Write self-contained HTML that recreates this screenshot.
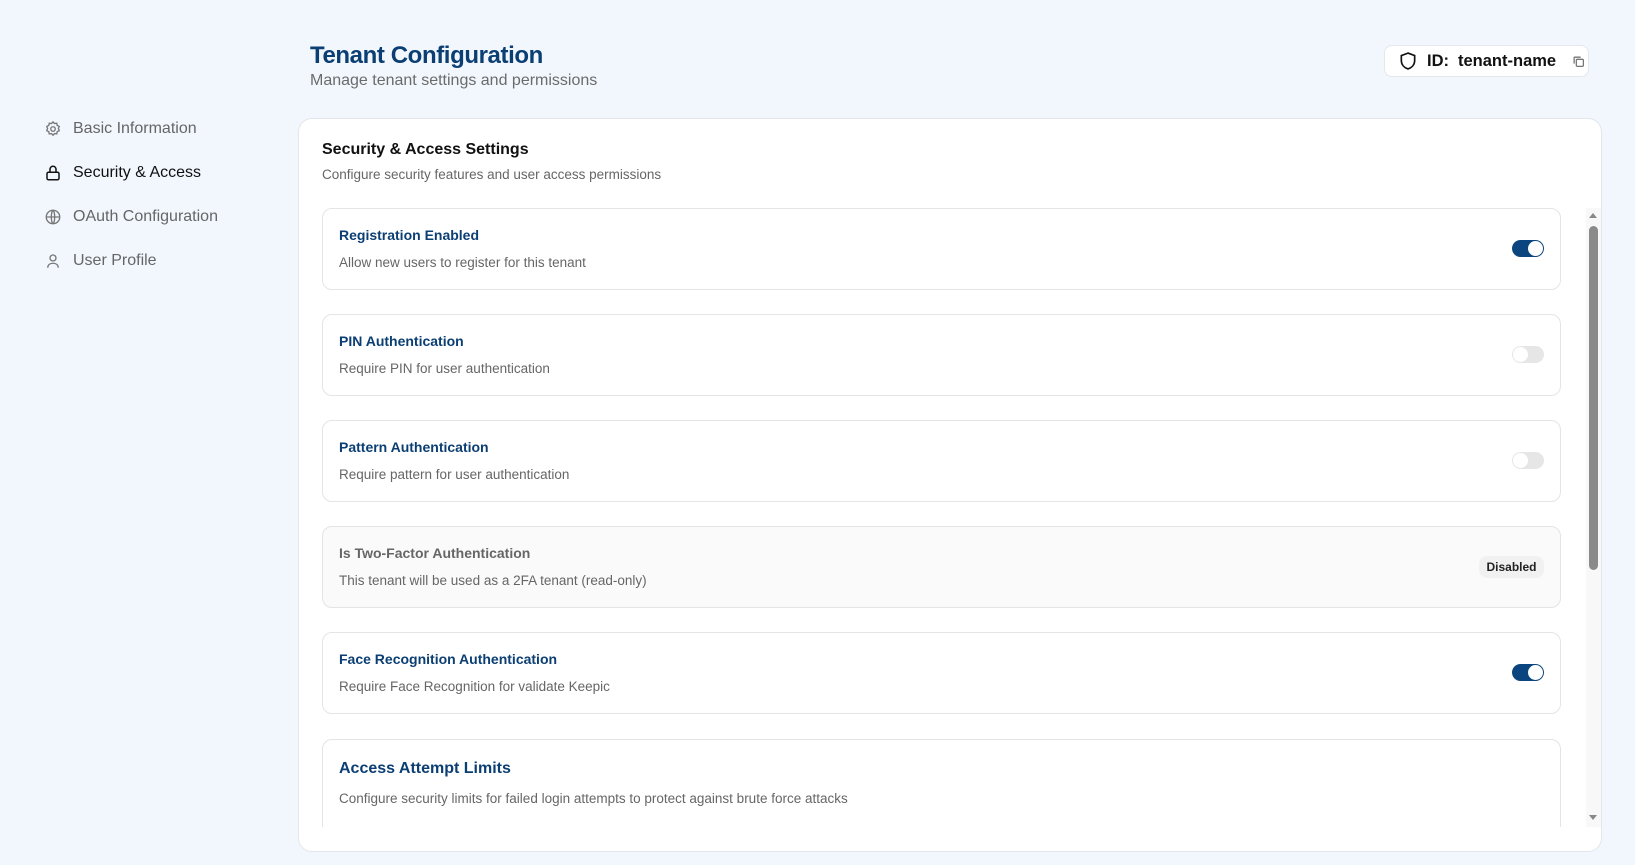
<!DOCTYPE html>
<html><head><meta charset="utf-8"><style>
*{box-sizing:border-box;margin:0;padding:0}
body{width:1635px;height:865px;background:#f2f7fe;font-family:"Liberation Sans",sans-serif;position:relative;overflow:hidden;color:#222}
.abs{position:absolute}
h1{position:absolute;left:310px;top:42px;font-size:24px;font-weight:700;color:#0b3e73;letter-spacing:-0.4px}
.sub{left:310px;top:72px;font-size:16px;color:#6b6b6b}
.nav{left:44px;font-size:16px;color:#666;display:flex;align-items:center;gap:11px}
.nav svg{width:18px;height:18px}
.badge{left:1384px;top:45px;width:205px;height:32px;background:#fff;border:1px solid #e4e7ec;border-radius:8px;display:flex;align-items:center;padding-left:13px;font-size:16.5px;font-weight:700;color:#111}
.card{left:298px;top:118px;width:1304px;height:734px;background:#fff;border:1px solid #e3e6ea;border-radius:14px}
.row{position:absolute;left:322px;width:1239px;height:82px;border:1px solid #e4e4e4;border-radius:10px;background:#fff}
.row .t{position:absolute;left:16px;top:18px;font-size:14px;font-weight:700;color:#0b3e73}
.row .d{position:absolute;left:16px;top:46px;font-size:13.5px;color:#666}
.tg{position:absolute;right:16px;top:31px;width:32px;height:17px;border-radius:9px;background:#0b4580}
.tg::after{content:"";position:absolute;right:1px;top:1px;width:15px;height:15px;border-radius:50%;background:#fff}
.tg.off{background:#e6e6e6}
.tg.off::after{left:1px;right:auto}
</style></head><body>
<h1>Tenant Configuration</h1>
<div class="abs sub">Manage tenant settings and permissions</div>

<div class="abs nav" style="top:120px"><svg viewBox="0 0 24 24" fill="none" stroke="#777" stroke-width="1.8"><circle cx="12" cy="12" r="3"/><path d="M12 2.5l2 2.2 3-.4.6 2.9 2.7 1.4-1.1 2.8 1.1 2.8-2.7 1.4-.6 2.9-3-.4-2 2.2-2-2.2-3 .4-.6-2.9-2.7-1.4 1.1-2.8-1.1-2.8 2.7-1.4.6-2.9 3 .4z"/></svg><span>Basic Information</span></div>
<div class="abs nav" style="top:164px;color:#111"><svg viewBox="0 0 24 24" fill="none" stroke="#111" stroke-width="2"><rect x="4" y="11" width="16" height="10" rx="2"/><path d="M8 11V7a4 4 0 0 1 8 0v4"/></svg><span>Security &amp; Access</span></div>
<div class="abs nav" style="top:208px"><svg viewBox="0 0 24 24" fill="none" stroke="#777" stroke-width="1.8"><circle cx="12" cy="12" r="9"/><path d="M3 12h18M12 3c3 3 3 15 0 18M12 3c-3 3-3 15 0 18"/></svg><span>OAuth Configuration</span></div>
<div class="abs nav" style="top:252px"><svg viewBox="0 0 24 24" fill="none" stroke="#777" stroke-width="1.8"><circle cx="12" cy="8" r="4"/><path d="M5 21c0-4 3-6 7-6s7 2 7 6"/></svg><span>User Profile</span></div>

<div class="abs badge"><svg width="20" height="20" viewBox="0 0 24 24" fill="none" stroke="#111" stroke-width="2"><path d="M12 2.5l8 3v6c0 5-3.5 8.5-8 10-4.5-1.5-8-5-8-10v-6z"/></svg><span style="margin-left:9px">ID:</span><span style="margin-left:9px">tenant-name</span><svg style="margin-left:16px" width="13" height="13" viewBox="0 0 24 24" fill="none" stroke="#777" stroke-width="2.4"><rect x="8" y="8" width="13" height="13" rx="2"/><path d="M4 16V5a1 1 0 0 1 1-1h11"/></svg></div>

<div class="abs card"></div>
<div class="abs" style="left:322px;top:141px;font-size:16px;font-weight:700;color:#111">Security &amp; Access Settings</div>
<div class="abs" style="left:322px;top:167px;font-size:13.5px;color:#666">Configure security features and user access permissions</div>

<div class="abs" style="left:300px;top:200px;width:1286px;height:627px;overflow:hidden">
<div class="row" style="left:22px;top:8px"><div class="t">Registration Enabled</div><div class="d">Allow new users to register for this tenant</div><div class="tg"></div></div>
<div class="row" style="left:22px;top:114px"><div class="t">PIN Authentication</div><div class="d">Require PIN for user authentication</div><div class="tg off"></div></div>
<div class="row" style="left:22px;top:220px"><div class="t">Pattern Authentication</div><div class="d">Require pattern for user authentication</div><div class="tg off"></div></div>
<div class="row" style="left:22px;top:326px;background:#fafafa"><div class="t" style="color:#666">Is Two-Factor Authentication</div><div class="d">This tenant will be used as a 2FA tenant (read-only)</div><div style="position:absolute;right:16px;top:29px;width:65px;height:22px;border-radius:8px;background:#f1f1f1;font-size:12px;font-weight:700;color:#222;text-align:center;line-height:22px">Disabled</div></div>
<div class="row" style="left:22px;top:432px"><div class="t">Face Recognition Authentication</div><div class="d">Require Face Recognition for validate Keepic</div><div class="tg"></div></div>
<div class="row" style="left:22px;top:539px;height:120px"><div class="t" style="font-size:16px;top:20px">Access Attempt Limits</div><div class="d" style="top:51px;font-size:13.5px">Configure security limits for failed login attempts to protect against brute force attacks</div></div>
</div>
<div class="abs" style="left:1586px;top:208px;width:15px;height:619px;background:#f8f8f8"></div>
<div class="abs" style="left:1589px;top:226px;width:9px;height:344px;border-radius:5px;background:#8a8a8a"></div>
<div class="abs" style="left:1589px;top:213px;width:0;height:0;border-left:4px solid transparent;border-right:4px solid transparent;border-bottom:5px solid #888"></div>
<div class="abs" style="left:1589px;top:815px;width:0;height:0;border-left:4px solid transparent;border-right:4px solid transparent;border-top:5px solid #888"></div>
</body></html>
